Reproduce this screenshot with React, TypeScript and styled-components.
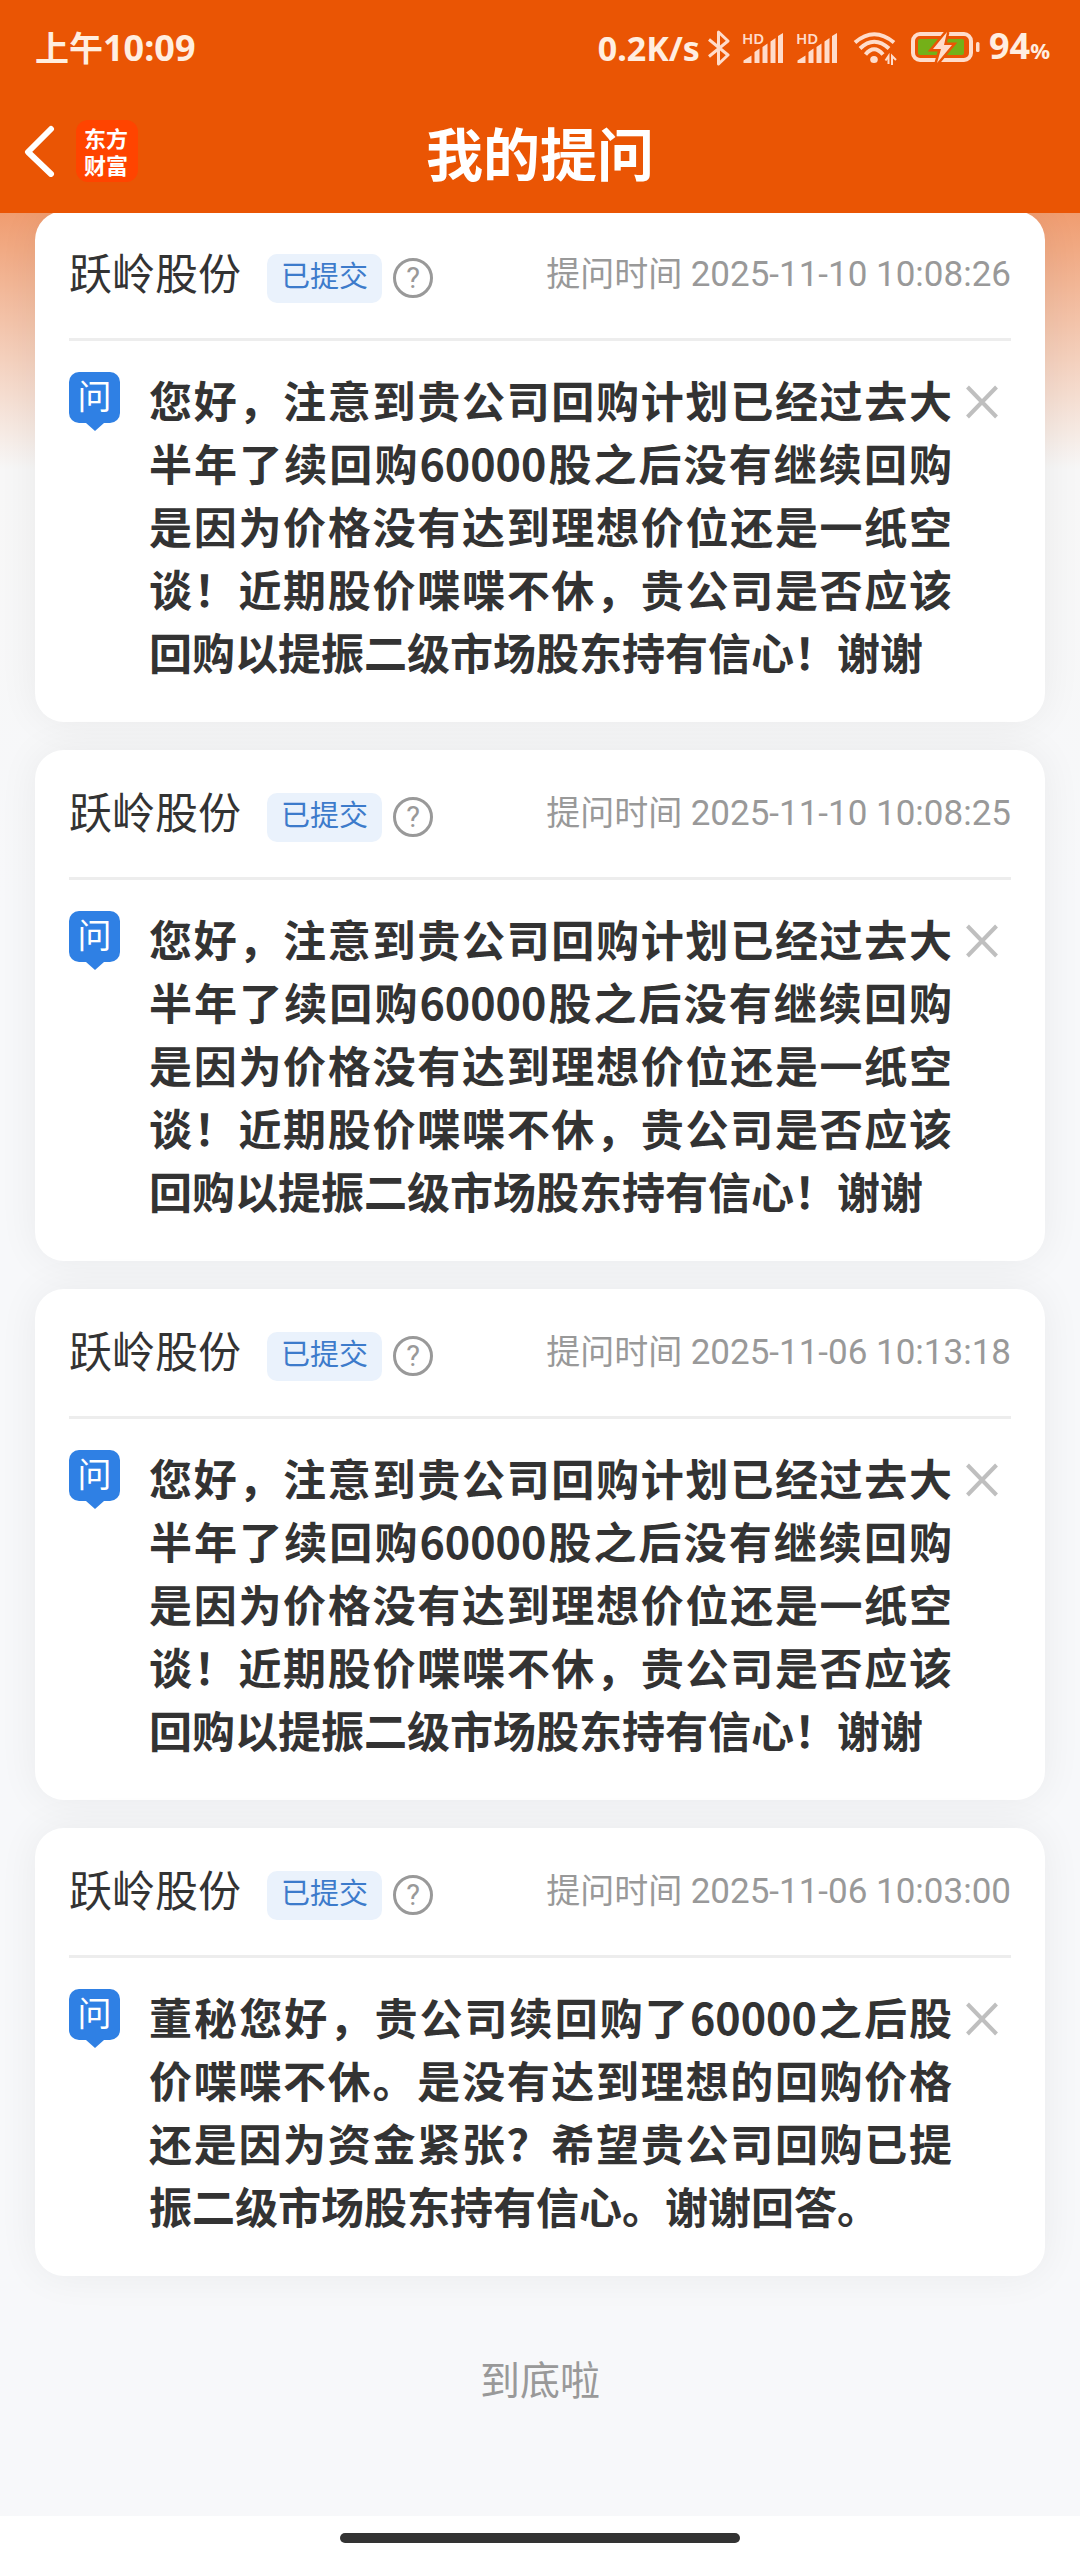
import React from "react";
import styled, { createGlobalStyle } from "styled-components";

const GlobalStyle = createGlobalStyle`
  *, *::before, *::after { box-sizing: border-box; }
  body {
    margin: 0;
    background: #ffffff;
    font-family: Roboto, "Noto Sans CJK SC", sans-serif;
    color: #333333;
  }
  h1, h2, p { margin: 0; font-weight: 400; }
  button { margin: 0; padding: 0; border: 0; background: none; font: inherit; color: inherit; cursor: pointer; }
`;

const Page = styled.div`
  min-height: 100vh;
  display: flex;
  flex-direction: column;
`;

const Header = styled.header`
  position: sticky;
  top: 0;
  z-index: 2;
  background: #ea5504;
`;

const StatusBar = styled.div`
  display: flex;
  align-items: center;
  justify-content: space-between;
  height: 95px;
  padding: 0 30px 0 35px;
  font-family: "Noto Sans", "Noto Sans CJK SC", sans-serif;
  font-size: 36px;
  font-weight: 700;
  line-height: 48px;
  color: #ffeee0;
`;

const Clock = styled.time`
  display: flex;
  align-items: center;
`;

const DayPart = styled.span`
  font-size: 34px;
`;

const StatusIcons = styled.div`
  display: flex;
  align-items: center;
`;

const NetSpeed = styled.span`
  font-size: 34px;
`;

const StatusIcon = styled.svg<{ $gap: number }>`
  display: block;
  flex: none;
  margin-left: ${(p) => p.$gap}px;
`;

const Battery = styled.span`
  margin-left: 8px;
  small { font-size: 22px; }
`;

const NavBar = styled.nav`
  display: grid;
  grid-template-columns: 1fr auto 1fr;
  align-items: center;
  height: 118px;
  padding: 0 24px 7px;
`;

const NavStart = styled.div`
  display: flex;
  align-items: center;
  gap: 20px;
`;

const BackButton = styled.button`
  display: flex;
`;

const Logo = styled.a`
  display: flex;
  flex-direction: column;
  align-items: center;
  justify-content: center;
  width: 62px;
  height: 62px;
  padding-right: 2px;
  border-radius: 12px;
  background: #ff4400;
  color: #ffffff;
  font-family: "Noto Sans CJK SC", sans-serif;
  font-size: 22px;
  font-weight: 700;
  line-height: 27px;
  text-decoration: none;
`;

const Title = styled.h1`
  font-family: "Noto Sans CJK SC", sans-serif;
  font-size: 57px;
  font-weight: 700;
  line-height: 80px;
  color: #ffffff;
`;

const Main = styled.main`
  flex: 1;
  margin-top: -2px;
  padding: 0 35px;
  background: linear-gradient(#f09c6f, #f7f7f7 258px, #f7f8fa 700px);
`;

const List = styled.div`
  display: flex;
  flex-direction: column;
  gap: 28px;
`;

const Card = styled.article`
  padding: 0 34px 39px;
  border-radius: 29px;
  background: #ffffff;
  box-shadow: 0 0 40px rgba(0, 0, 0, 0.06);
`;

const CardHead = styled.header`
  display: flex;
  align-items: center;
  height: 130px;
  border-bottom: 3px solid #ededed;
`;

const Company = styled.h2`
  font-size: 43px;
  line-height: 64px;
`;

const Status = styled.span`
  margin: 7px 11px 0 26px;
  padding: 0 14px;
  height: 49px;
  border-radius: 10px;
  background: #eaf2fc;
  color: #3d7bcb;
  font-size: 29px;
  line-height: 47px;
`;

const HelpButton = styled.button`
  width: 40px;
  height: 40px;
  margin-top: 7px;
  border: 3px solid #999999;
  border-radius: 50%;
  color: #999999;
  font-size: 29px;
  line-height: 34px;
`;

const AskedAt = styled.p`
  margin-left: auto;
  color: #999999;
  font-size: 34px;
  line-height: 48px;
  time { font-size: 35px; }
`;

const Question = styled.div`
  display: flex;
  align-items: flex-start;
  padding-top: 27px;
`;

const AskMark = styled.span`
  position: relative;
  flex: none;
  width: 51px;
  height: 51px;
  margin: 4px 29px 0 0;
  border-radius: 10px;
  background: #2f80e4;
  color: #ffffff;
  font-size: 34px;
  line-height: 51px;
  text-align: center;

  &::after {
    content: "";
    position: absolute;
    top: 100%;
    left: 50%;
    border: 9px solid transparent;
    border-top: 8px solid #2f80e4;
    border-bottom: 0;
    transform: translateX(-50%);
  }
`;

const QuestionText = styled.p`
  flex: 1;
  font-family: "Noto Sans CJK SC", sans-serif;
  font-size: 43px;
  font-weight: 700;
  line-height: 63px;
  text-align: justify;
`;

const CloseButton = styled.button`
  display: flex;
  margin: 17px 13px 0 14px;
`;

const EndNote = styled.p`
  padding: 76px 0 100px;
  color: #999999;
  font-size: 40px;
  line-height: 60px;
  text-align: center;
`;

const GestureBar = styled.footer`
  display: flex;
  justify-content: center;
  height: 44px;
  padding-top: 17px;
  background: #ffffff;
`;

const Handle = styled.div`
  width: 37%;
  height: 10px;
  border-radius: 5px;
  background: #333333;
`;

const SignalIcon = ({ gap }: { gap: number }) => (
  <StatusIcon $gap={gap} width="42" height="42" viewBox="0 -5 42 42" fill="#ffdccb">
    <text x="0" y="12" fontSize="15" fontWeight="600" fontFamily="Noto Sans, sans-serif">HD</text>
    <path d="M1.500 31v-2.500l8-5V31zM12.500 31V20l5-3.500V31zM20.500 31V15l5-3.500V31zM28.500 31V9.500l5-3.500V31zM36 31V4l5-3v30z" />
  </StatusIcon>
);

const questionText =
  "您好，注意到贵公司回购计划已经过去大半年了续回购60000股之后没有继续回购是因为价格没有达到理想价位还是一纸空谈！近期股价喋喋不休，贵公司是否应该回购以提振二级市场股东持有信心！谢谢";

const questions = [
  { time: "2025-11-10 10:08:26", text: questionText },
  { time: "2025-11-10 10:08:25", text: questionText },
  { time: "2025-11-06 10:13:18", text: questionText },
  {
    time: "2025-11-06 10:03:00",
    text: "董秘您好，贵公司续回购了60000之后股价喋喋不休。是没有达到理想的回购价格还是因为资金紧张？希望贵公司回购已提振二级市场股东持有信心。谢谢回答。",
  },
];

const QuestionCard = ({ time, text }: { time: string; text: string }) => (
  <Card>
    <CardHead>
      <Company>跃岭股份</Company>
      <Status>已提交</Status>
      <HelpButton aria-label="状态说明">?</HelpButton>
      <AskedAt>
        提问时间 <time>{time}</time>
      </AskedAt>
    </CardHead>
    <Question>
      <AskMark>问</AskMark>
      <QuestionText>{text}</QuestionText>
      <CloseButton aria-label="删除提问">
        <svg width="32" height="34" viewBox="0 0 32 34" stroke="#bfbfbf" strokeWidth="4">
          <path d="M1.500 2l29 30M30.500 2l-29 30" />
        </svg>
      </CloseButton>
    </Question>
  </Card>
);

export default function App() {
  return (
    <Page>
      <GlobalStyle />
      <Header>
        <StatusBar>
          <Clock>
            <DayPart>上午</DayPart>10:09
          </Clock>
          <StatusIcons>
            <NetSpeed>0.2K/s</NetSpeed>
            <StatusIcon $gap={8} width="22" height="36" viewBox="0 0 22 36" fill="none" stroke="#ffdccb" strokeWidth="3" strokeLinejoin="round">
              <path d="M1 9.500L20 25l-9.500 9V2l9.500 9L1 26.500" />
            </StatusIcon>
            <SignalIcon gap={12} />
            <SignalIcon gap={12} />
            <StatusIcon $gap={15} width="44" height="34" viewBox="0 0 44 34" fill="none" stroke="#ffdccb" strokeWidth="4">
              <path d="M2 11.500Q21-5 41 11.500M7 17.500Q21 4 36 17.500M12.500 23.500Q21 13 30 23.500" />
              <ellipse cx="21" cy="28.500" rx="3.800" ry="3.500" fill="#ffdccb" stroke="none" />
              <path d="M35.500 33v-8l-3 4.500M39 34v-9l4 4" strokeWidth="2" />
            </StatusIcon>
            <StatusIcon $gap={14} width="70" height="32" viewBox="0 0 70 32" fill="none">
              <rect x="2" y="2" width="58" height="26" rx="7" stroke="#ffdccb" strokeWidth="4" />
              <rect x="7" y="7" width="46" height="16" rx="2" fill="#74b018" />
              <rect x="65" y="10" width="3.500" height="10" rx="1.500" fill="#ffdccb" />
              <path d="M36 0L22 17h8l-4 14 15-18h-8l3-13z" fill="#ffdccb" stroke="#ea5504" strokeWidth="5" paintOrder="stroke" />
            </StatusIcon>
            <Battery>
              94<small>%</small>
            </Battery>
          </StatusIcons>
        </StatusBar>
        <NavBar>
          <NavStart>
            <BackButton aria-label="返回">
              <svg width="32" height="52" viewBox="0 0 32 52" fill="none" stroke="#ffffff" strokeWidth="6" strokeLinecap="round" strokeLinejoin="round">
                <path d="M27 4L4 27l23 22" />
              </svg>
            </BackButton>
            <Logo href="#">
              <span>东方</span>
              <span>财富</span>
            </Logo>
          </NavStart>
          <Title>我的提问</Title>
        </NavBar>
      </Header>
      <Main>
        <List>
          {questions.map((q) => (
            <QuestionCard key={q.time} {...q} />
          ))}
        </List>
        <EndNote>到底啦</EndNote>
      </Main>
      <GestureBar>
        <Handle />
      </GestureBar>
    </Page>
  );
}
